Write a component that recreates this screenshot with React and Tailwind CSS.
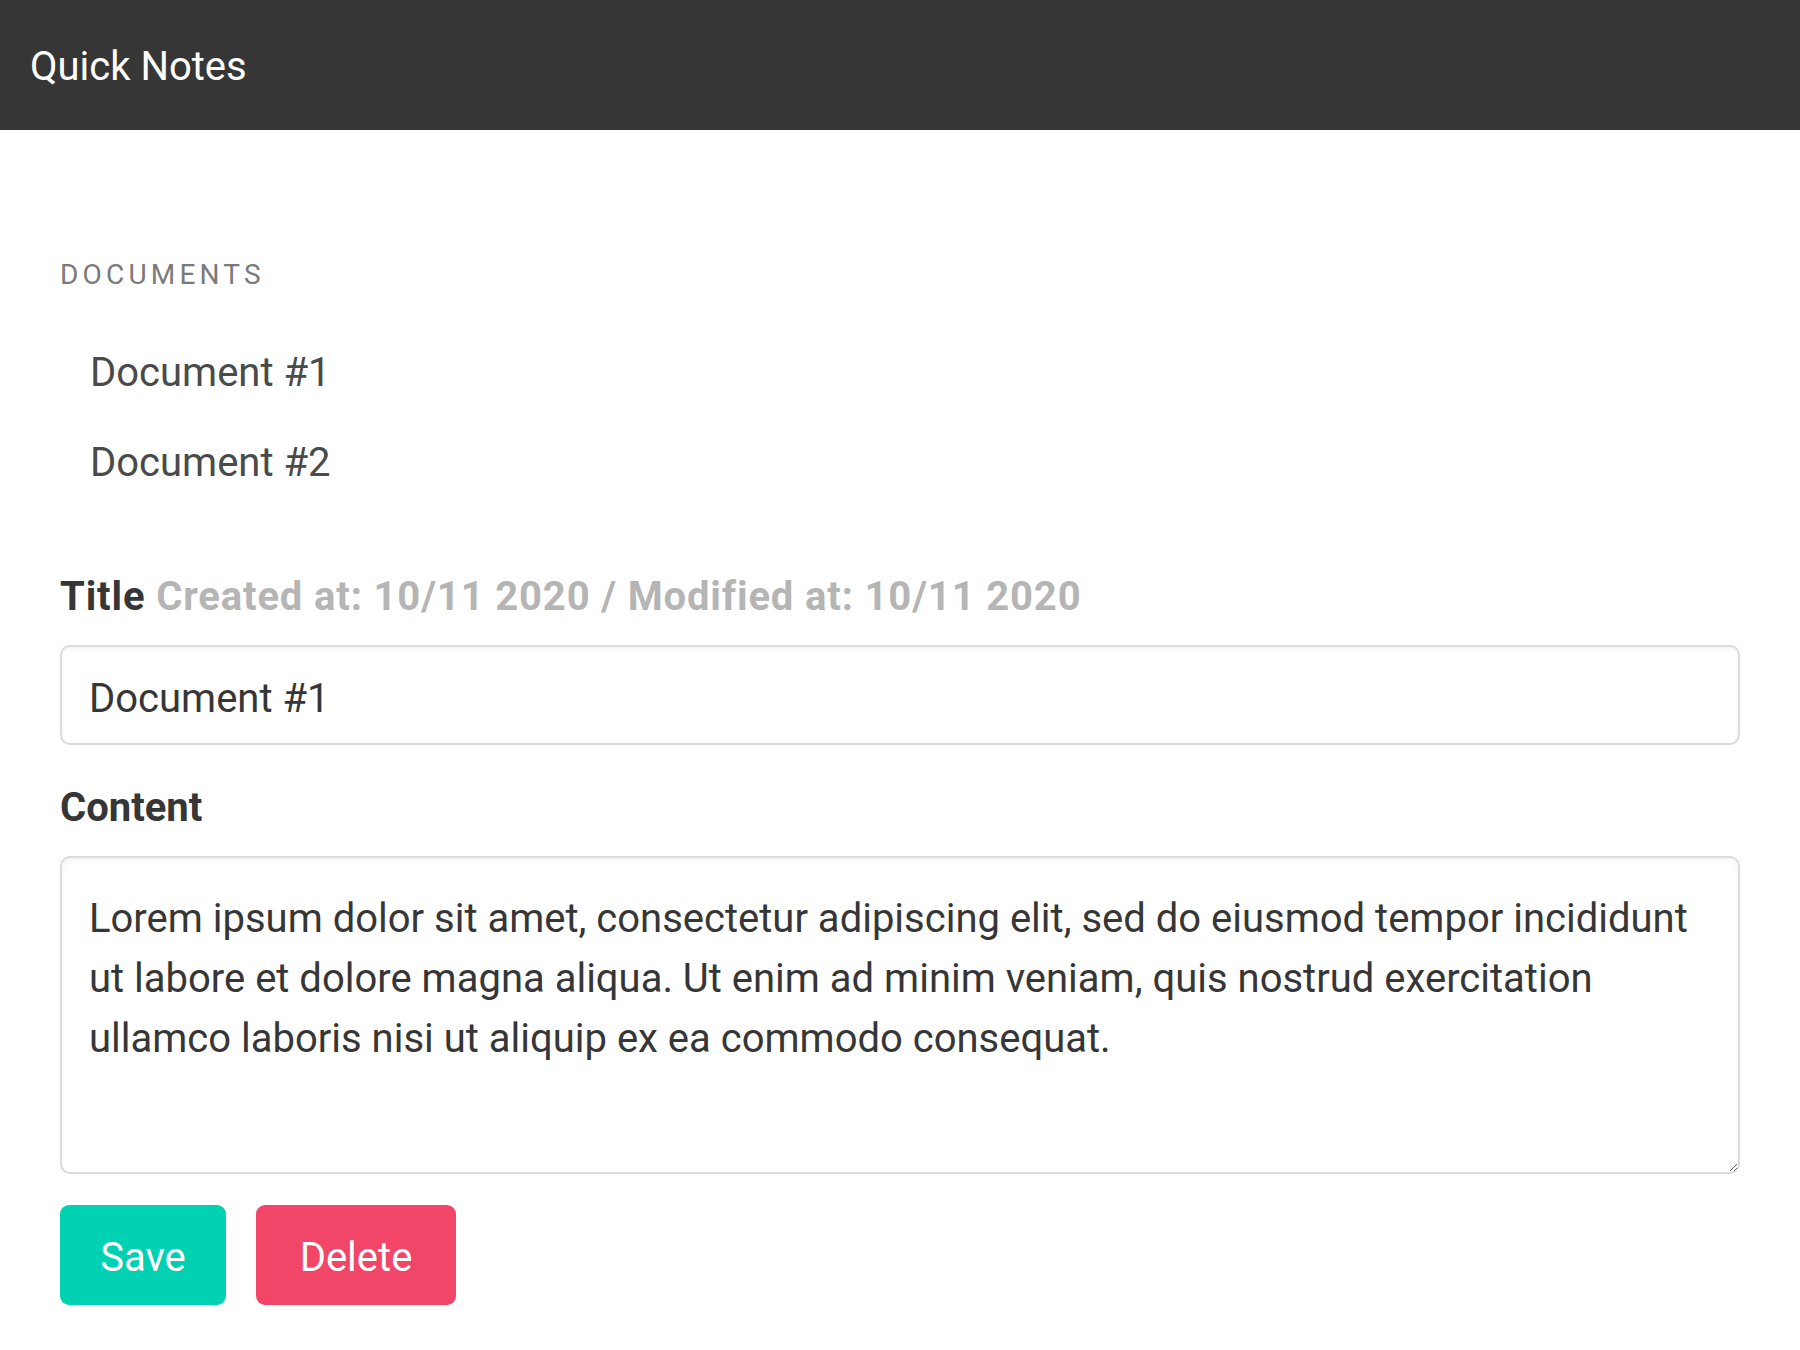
export default function App() {
  const lorem =
    "Lorem ipsum dolor sit amet, consectetur adipiscing elit, sed do eiusmod tempor incididunt ut labore et dolore magna aliqua. Ut enim ad minim veniam, quis nostrud exercitation ullamco laboris nisi ut aliquip ex ea commodo consequat.";
  return (
    <div className="min-h-screen bg-white font-[family-name:Roboto,'Liberation_Sans',sans-serif]">
      <header className="h-[130px] bg-[#363636] pl-[30px] pt-[42px]">
        <div className="text-[40px] leading-[50px] text-white">Quick Notes</div>
      </header>

      <section className="px-[60px] pt-[127px] pb-[40px]">
        <aside>
          <p className="text-[28px] leading-[35px] uppercase tracking-[4.2px] text-[#7a7a7a]">Documents</p>
          <ul className="mt-[36px]">
            <li>
              <a className="block py-[20px] pl-[30px] text-[40px] leading-[50px] text-[#4a4a4a]">Document #1</a>
            </li>
            <li>
              <a className="block py-[20px] pl-[30px] text-[40px] leading-[50px] text-[#4a4a4a]">Document #2</a>
            </li>
          </ul>
        </aside>

        <form className="mt-[56px]" onSubmit={(e) => e.preventDefault()}>
          <div className="mb-[30px]">
            <label className="mb-[18px] block pt-[3px] text-[40px] font-bold leading-[60px] tracking-[0.85px] text-[#363636]">
              Title <span className="text-[#b5b5b5]">Created at: 10/11 2020 / Modified at: 10/11 2020</span>
            </label>
            <input
              readOnly
              value="Document #1"
              className="block h-[100px] w-full rounded-[10px] border-2 border-[#dbdbdb] bg-white pt-[21px] pb-[15px] pl-[27px] pr-[27px] text-[40px] leading-[60px] text-[#363636] shadow-[inset_0_2.5px_5px_rgba(10,10,10,0.05)] outline-none"
            />
          </div>

          <div className="mb-[31px]">
            <label className="mb-[18px] block pt-[3px] text-[40px] font-bold leading-[60px] text-[#363636]">Content</label>
            <textarea
              readOnly
              value={lorem}
              className="block h-[318px] w-full resize-y rounded-[10px] border-2 border-[#dbdbdb] bg-white pt-[31px] pb-[27px] pl-[27px] pr-[27px] text-[40px] leading-[60px] text-[#363636] shadow-[inset_0_2.5px_5px_rgba(10,10,10,0.05)] outline-none"
            />
          </div>

          <div className="flex gap-[30px]">
            <button
              type="button"
              className="flex h-[100px] w-[166px] items-center justify-center rounded-[9px] bg-[#00d1b2] pt-[5px] text-[40px] leading-[50px] text-white"
            >
              Save
            </button>
            <button
              type="button"
              className="flex h-[100px] w-[200px] items-center justify-center rounded-[9px] bg-[#f14668] pt-[5px] text-[40px] leading-[50px] text-white"
            >
              Delete
            </button>
          </div>
        </form>
      </section>
    </div>
  );
}
